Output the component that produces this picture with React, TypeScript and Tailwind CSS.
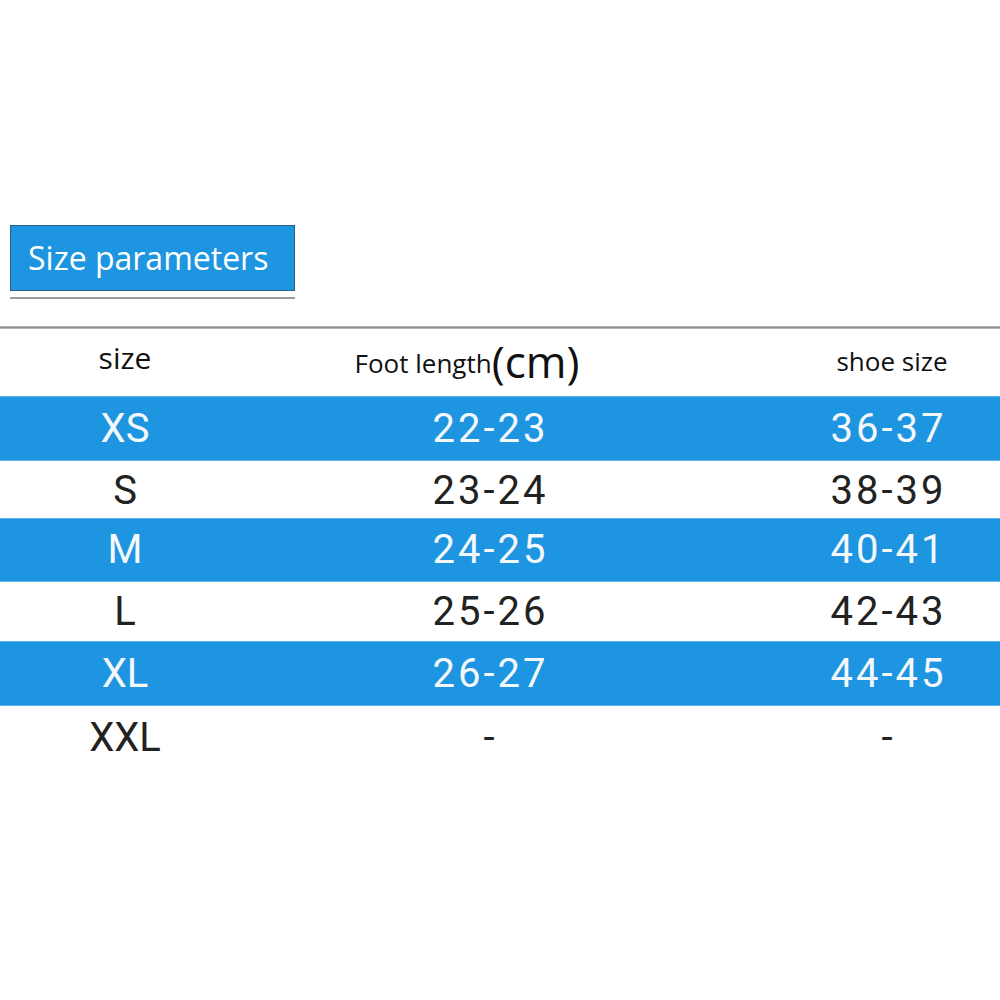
import React from "react";

const rows = [
  { s: "XS", f: "22-23", z: "36-37", blue: true, h: "h-[65px]" },
  { s: "S", f: "23-24", z: "38-39", blue: false, h: "h-[57px]" },
  { s: "M", f: "24-25", z: "40-41", blue: true, h: "h-[64px]" },
  { s: "L", f: "25-26", z: "42-43", blue: false, h: "h-[59px]" },
  { s: "XL", f: "26-27", z: "44-45", blue: true, h: "h-[65px]" },
  { s: "XXL", f: "-", z: "-", blue: false, h: "h-[64px]" },
];

export default function App() {
  return (
    <div className="w-[1000px] h-[1000px] bg-white overflow-hidden" style={{ fontFamily: "Roboto, 'Liberation Sans', sans-serif" }}>
      <div className="h-[225px]" />
      <div className="pl-[10px]">
        <div className="w-[285px] h-[66px] bg-[#1e95e0] border border-[#2e5f86] flex items-center pl-[17px] text-white text-[32px] font-['Open_Sans',sans-serif]">
          Size parameters
        </div>
        <div className="w-[285px] h-[2px] bg-[#9a9a9a] mt-[6px]" />
      </div>
      <div className="h-[27px]" />
      <div className="h-[3px] bg-gradient-to-b from-[#c8c8c8] via-[#8e8e8e] to-[#c8c8c8]" />
      <div className="grid grid-cols-[250px_478px_1fr] h-[67px] items-center text-[#111] font-['Open_Sans',sans-serif]">
        <div className="text-center text-[30px] pb-[10px]">size</div>
        <div className="text-center pr-[44px] pb-[4px] flex items-center justify-center">
          <span className="text-[26px] mt-[6px]">Foot length</span>
          <span className="text-[44px] leading-none">(cm)</span>
        </div>
        <div className="text-center pl-[56px] text-[26px] pb-[2px]">shoe size</div>
      </div>
      {rows.map((r) => (
        <div
          key={r.s}
          className={`grid grid-cols-[250px_478px_1fr] items-center text-[40px] ${r.h} ${
            r.blue ? "bg-[#1e95e0] text-[#f4f8fc] border-t border-b border-[#5db4ea]" : "bg-white text-[#222]"
          }`}
        >
          <div className="text-center">{r.s}</div>
          <div className="text-center tracking-[3px] pl-[3px]">{r.f}</div>
          <div className="text-center tracking-[3px] pl-[49px]">{r.z}</div>
        </div>
      ))}
    </div>
  );
}
